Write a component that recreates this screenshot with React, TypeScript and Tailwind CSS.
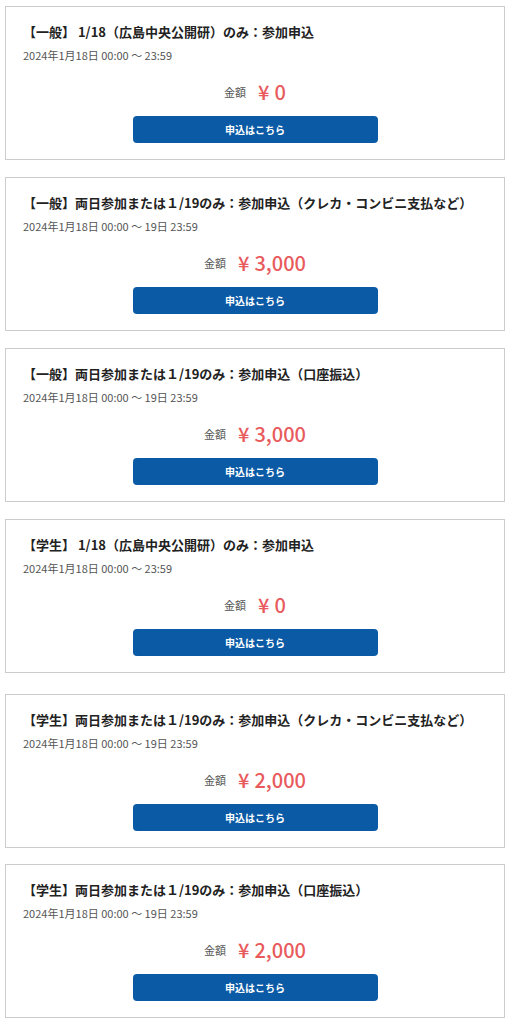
const font = {
  fontFamily: '"Noto Sans CJK JP", "Noto Sans", sans-serif',
};

type Ticket = {
  title: string;
  period: string;
  price: string;
  gap: string;
};

const tickets: Ticket[] = [
  {
    title: "【一般】 1/18（広島中央公開研）のみ：参加申込",
    period: "2024年1月18日 00:00 ～ 23:59",
    price: "0",
    gap: "mt-[6px]",
  },
  {
    title: "【一般】両日参加または１/19のみ：参加申込（クレカ・コンビニ支払など）",
    period: "2024年1月18日 00:00 ～ 19日 23:59",
    price: "3,000",
    gap: "mt-[17px]",
  },
  {
    title: "【一般】両日参加または１/19のみ：参加申込（口座振込）",
    period: "2024年1月18日 00:00 ～ 19日 23:59",
    price: "3,000",
    gap: "mt-[17px]",
  },
  {
    title: "【学生】 1/18（広島中央公開研）のみ：参加申込",
    period: "2024年1月18日 00:00 ～ 23:59",
    price: "0",
    gap: "mt-[17px]",
  },
  {
    title: "【学生】両日参加または１/19のみ：参加申込（クレカ・コンビニ支払など）",
    period: "2024年1月18日 00:00 ～ 19日 23:59",
    price: "2,000",
    gap: "mt-[21px]",
  },
  {
    title: "【学生】両日参加または１/19のみ：参加申込（口座振込）",
    period: "2024年1月18日 00:00 ～ 19日 23:59",
    price: "2,000",
    gap: "mt-[16px]",
  },
];

function TicketCard({ t }: { t: Ticket }) {
  return (
    <div
      className={`${t.gap} mr-[4px] ml-[5px] flex h-[154px] flex-col border border-[#cccccc] bg-white px-[17px] pt-[15px] pb-[16px]`}
    >
      <p className="text-[13px] leading-[20px] font-bold whitespace-nowrap text-[#222222]">
        {t.title}
      </p>
      <p className="mt-[4px] text-[11px] leading-[18px] text-[#555555]">
        {t.period}
      </p>
      <div className="mt-[14px] flex h-[28px] items-center justify-center gap-[12px]">
        <span className="text-[11px] text-[#555555]">金額</span>
        <span className="flex items-center gap-[5px] text-[20px] leading-[28px] font-medium text-[#e85a5c]">
          <span>¥</span>
          <span>{t.price}</span>
        </span>
      </div>
      <button
        type="button"
        className="mx-auto mt-[10px] h-[27px] w-[245px] rounded-[4px] bg-[#0b5aa6] text-[10px] font-bold text-white"
      >
        申込はこちら
      </button>
    </div>
  );
}

export default function App() {
  return (
    <div className="min-h-[1024px] w-[509px] bg-white" style={font}>
      {tickets.map((t, i) => (
        <TicketCard key={i} t={t} />
      ))}
    </div>
  );
}
